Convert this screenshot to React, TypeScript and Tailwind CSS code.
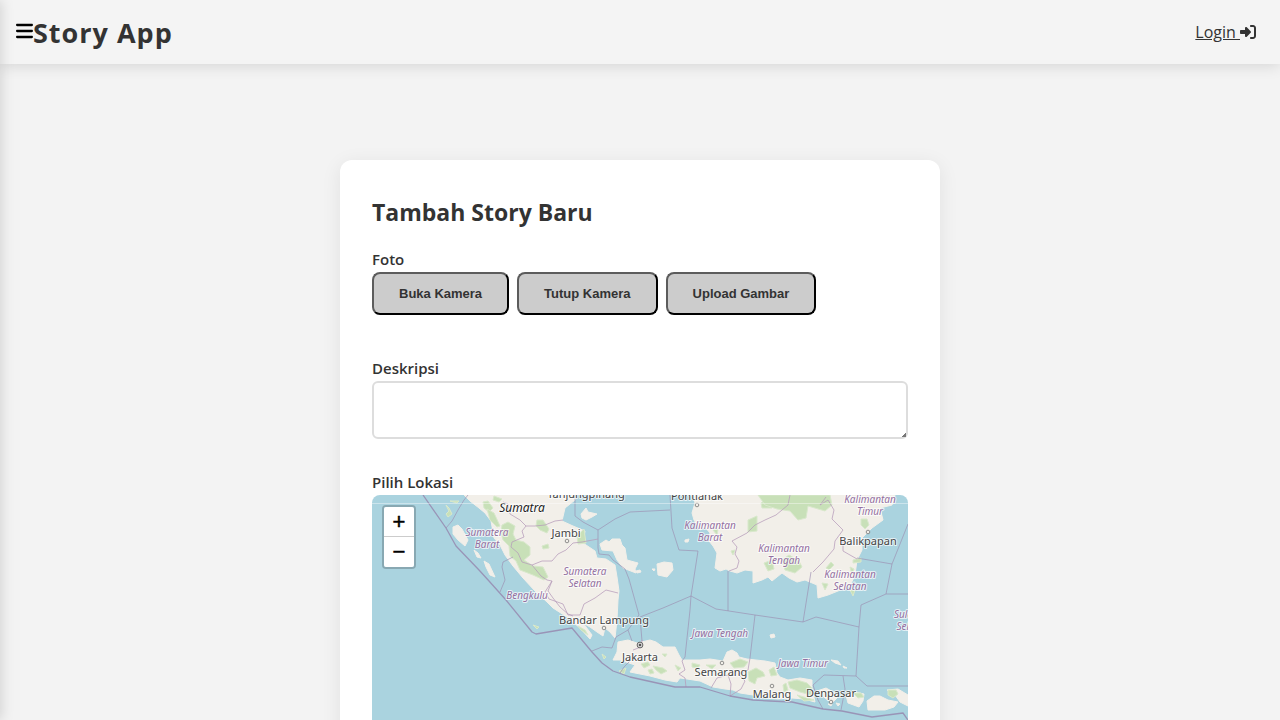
import { FaBars, FaRightToBracket } from "react-icons/fa6";

const land = [
  // Sumatra
  "M464 495L470 501L479 508L485 513L491 521L494 538L500 545L505 555L513 566L523 578L535 591L547 602L553 608L567 617L580 628L590 639L592 635L583 623L590 627L597 632L603 636L605 628L610 632L615 638L617 620L618 600L619 591L617 577L615 565L606 559L597 558L595 551L583 543L585 531L573 526L562 521L565 508L575 500L576 495Z",
  // Bangka
  "M602 550L600 544L606 540L609 542L612 539L620 539L622 545L625 548L627 560L638 563L635 569L636 573L623 568L617 560L613 551Z",
  // Belitung
  "M657 564L664 562L672 563L673 570L667 577L658 575Z",
  // Kalimantan
  "M693 495L695 503L692 513L694 520L700 530L705 527L710 533L709 541L713 546L717 553L715 568L720 571L726 569L730 571L737 573L745 570L753 571L753 583L762 580L768 577L772 581L782 573L789 578L797 582L805 580L817 585L818 598L828 595L838 591L850 586L855 575L857 560L862 550L862 538L872 528L883 520L880 508L892 505L895 495Z",
  // Java
  "M613 660L617 652L618 642L628 640L637 643L650 640L656 642L663 647L675 647L679 655L682 660L700 660L710 659L723 661L727 652L732 650L737 653L739 657L747 659L765 661L775 663L777 673L780 677L788 680L800 678L812 680L812 688L815 702L804 699L792 698L778 699L765 698L753 695L740 693L733 690L725 689L713 687L700 681L687 679L680 678L677 682L665 680L650 676L630 672L635 665L620 660Z",
  // Bali, Lombok, Sumbawa
  "M817 691L826 688L835 693L838 697L832 703L825 698Z",
  "M846 695L855 692L864 694L863 701L859 707L848 703Z",
  "M867 701L874 696L880 696L888 700L898 702L894 707L885 710L868 710Z",
  "M887 690L898 689L908 695L908 706L900 702L895 695Z",
  // Islands off the west coast
  "M453 527L458 525L462 529L468 540L465 546L458 540L453 534Z",
  "M474 550L478 553L481 558L477 557Z",
  "M484 561L489 564L495 577L490 575L486 567Z",
  "M581 514L586 508L588 512L597 514L592 517L586 520L582 518Z",
  "M685 540L689 539L688 542L685 542Z",
  "M636 571L640 570L641 572L637 573ZM652 569L655 569L654 571Z",
  "M770 635L774 634L775 637L771 638ZM831 660L838 661L841 665L835 663ZM843 666L847 668L844 668Z",
  "M828 704L832 704L831 706ZM836 703L840 704L838 706Z",
];

const forest = [
  "M483 502L488 501L493 508L489 512L484 508Z",
  "M487 509L494 513L500 526L497 527L490 520Z",
  "M494 496L502 499L499 502L493 500Z",
  "M446 505L449 508L452 514L448 517L446 514L449 511ZM450 501L459 501L457 503Z",
  "M502 525L508 522L515 526L513 534L516 540L524 542L530 547L530 555L524 560L533 566L543 567L548 577L544 580L533 575L520 570L516 561L510 556L509 546L503 540L501 532Z",
  "M537 520L543 520L549 529L547 533L540 530L536 526Z",
  "M542 546L548 544L549 548L543 549Z",
  "M577 536L584 529L586 543L578 544Z",
  "M533 625L539 627L537 629ZM578 626L585 630L588 635L581 630ZM602 654L606 657L604 659Z",
  "M761 503L768 498L778 500L772 508L762 508Z",
  "M748 520L757 516L757 531L748 532Z",
  "M758 495L830 495L832 505L825 511L808 506L806 518L798 520L790 511L777 509L765 505Z",
  "M764 563L772 560L774 569L768 571ZM782 560L789 555L799 561L802 567L795 573L785 570Z",
  "M861 519L867 519L869 525L865 529L861 525Z",
  "M853 560L861 558L861 562L853 563ZM850 567L854 569L852 575ZM822 583L828 584L825 590ZM826 568L831 562L834 565L829 570ZM850 590L855 590L853 596Z",
  "M713 530L718 529L717 535ZM731 551L735 550L733 555Z",
  "M641 664L648 662L650 665L644 668ZM653 666L663 668L667 671L661 674L656 670ZM648 670L652 669L654 673L650 674Z",
  "M662 654L667 654L665 657ZM675 665L681 668L678 671Z",
  "M692 663L700 665L698 668L692 667ZM706 665L716 665L712 669ZM730 663L740 659L748 662L744 667L734 668Z",
  "M748 672L756 668L763 672L765 676L757 678L755 684L749 681Z",
  "M788 682L797 680L807 683L812 688L811 695L800 692L790 688ZM797 695L814 700L804 701Z",
  "M769 670L774 667L777 675L771 676ZM783 685L786 683L788 690L784 692Z",
  "M853 693L861 693L864 697L858 698ZM888 690L896 690L898 694L893 698L888 695Z",
  "M619 671L626 668L624 674Z",
];

const seaBorders = [
  "M446 528L452 521L458 510L464 500L468 495",
  "M500 592L505 580L502 567L503 562L513 557",
  "M575 495L575 516L583 522L598 530L598 548L599 554L609 555L613 560L625 569L629 579L639 615",
  "M598 530L615 519L630 512L670 510",
  "M670 495L672 528L679 550L698 551L691 596L663 608L640 617L642 641",
  "M728 571L728 611M691 596L690 610L685 657L682 661",
  "M691 596L716 609L755 615L803 622L816 617L859 627",
  "M811 572L803 622",
  "M857 558L892 564L908 524M892 564L886 594L861 605L859 627L856 676L867 686L908 686M886 594L908 594",
  "M755 615L750 658",
  "M592 651L602 647L612 648L616 637L628 630L639 615",
  "M620 673L624 667L630 661",
  "M823 709L818 700L813 685L824 675L856 676M843 676L845 689L841 710",
  "M628 630L632 641",
];

const landBorders = [
  "M503 502L508 504L510 514L520 520L526 526L522 531L524 537L512 542L511 547L518 553L522 562L532 565L541 576L547 580L552 581L548 591L553 598L560 607L568 614L573 616",
  "M526 526L535 526L545 525L555 521L563 520",
  "M532 565L542 561L552 561L558 554L566 550L573 543L582 542L598 539",
  "M552 581L545 592L549 599L563 604L568 615L580 615L584 604L595 598L606 590L618 593",
  "M765 520L755 525L747 533L732 541L737 547L735 554L739 561L737 568L729 571",
  "M765 520L776 515L788 505L790 495",
  "M820 505L828 500L834 510L832 519L843 530L835 541L834 549L823 562L813 572",
  "M843 538L843 551L857 559M820 505L826 497",
  "M682 661L685 670L679 674L685 678L686 687",
  "M711 688L717 678L728 675L731 684L730 696L741 689L745 681L738 674L748 670L750 658",
  "M633 650L641 647L642 640",
];

type Label = { x: number; y: number; text: string };

const cities: Label[] = [
  { x: 586, y: 498, text: "Tanjungpinang" },
  { x: 697, y: 500, text: "Pontianak" },
  { x: 566, y: 537, text: "Jambi" },
  { x: 868, y: 545, text: "Balikpapan" },
  { x: 604, y: 624, text: "Bandar Lampung" },
  { x: 640, y: 661, text: "Jakarta" },
  { x: 721, y: 676, text: "Semarang" },
  { x: 772, y: 698, text: "Malang" },
  { x: 831, y: 697, text: "Denpasar" },
];

const provinces: Label[] = [
  { x: 487, y: 536, text: "Sumatera" },
  { x: 487, y: 548, text: "Barat" },
  { x: 585, y: 575, text: "Sumatera" },
  { x: 585, y: 587, text: "Selatan" },
  { x: 527, y: 599, text: "Bengkulu" },
  { x: 710, y: 529, text: "Kalimantan" },
  { x: 710, y: 541, text: "Barat" },
  { x: 784, y: 552, text: "Kalimantan" },
  { x: 784, y: 564, text: "Tengah" },
  { x: 870, y: 503, text: "Kalimantan" },
  { x: 870, y: 515, text: "Timur" },
  { x: 850, y: 578, text: "Kalimantan" },
  { x: 850, y: 590, text: "Selatan" },
  { x: 720, y: 637, text: "Jawa Tengah" },
  { x: 803, y: 667, text: "Jawa Timur" },
  { x: 913, y: 618, text: "Sulawesi" },
  { x: 913, y: 630, text: "Selatan" },
];

const towns = [
  [567, 541],
  [697, 505],
  [868, 532],
  [604, 628],
  [722, 663],
  [772, 686],
  [831, 702],
];

function MapDrawing() {
  return (
    <svg
      viewBox="372 495 536 400"
      preserveAspectRatio="xMinYMin slice"
      className="block h-full w-full font-['Noto_Sans',sans-serif]"
      role="img"
      aria-label="Peta Indonesia"
    >
      <rect x="372" y="495" width="536" height="400" fill="#aad3df" />
      <g fill="#f2efe9" stroke="#f2efe9" strokeWidth="1" strokeLinejoin="round">
        {land.map((d) => (
          <path key={d} d={d} />
        ))}
      </g>
      <g fill="#c8e0b8" stroke="#d8e8cb" strokeWidth="1" strokeLinejoin="round">
        {forest.map((d) => (
          <path key={d} d={d} />
        ))}
      </g>
      <g fill="none" stroke="#9b8db0" strokeOpacity="0.65" strokeWidth="1" strokeLinejoin="round">
        {seaBorders.map((d) => (
          <path key={d} d={d} />
        ))}
      </g>
      <g fill="none" stroke="#b59bba" strokeOpacity="0.75" strokeWidth="1" strokeLinejoin="round">
        {landBorders.map((d) => (
          <path key={d} d={d} />
        ))}
      </g>
      <path
        d="M423 495L446 528L456 546L479 570L489 581L506 600L532 632L536 634L572 628L592 652L602 663L613 671L630 677L675 687L700 687L730 696L753 700L770 701L792 702L823 709L842 711L872 717L903 713L908 720"
        fill="none"
        stroke="#9585ac"
        strokeOpacity="0.8"
        strokeWidth="1.3"
        strokeLinejoin="round"
      />
      <g fill="#f2efe9" stroke="#777" strokeWidth="0.8">
        {towns.map(([x, y]) => (
          <circle key={`${x}-${y}`} cx={x} cy={y} r="1.8" />
        ))}
      </g>
      <circle cx="640" cy="645" r="2.9" fill="#ddd" stroke="#555" strokeWidth="0.9" />
      <circle cx="640" cy="645" r="1.3" fill="#555" />
      <g
        textAnchor="middle"
        fill="#936fa0"
        stroke="#fff"
        strokeOpacity="0.7"
        strokeWidth="2"
        strokeLinejoin="round"
        paintOrder="stroke"
        fontStyle="italic"
        fontSize="10"
      >
        {provinces.map((l) => (
          <text key={`${l.text}-${l.x}-${l.y}`} x={l.x} y={l.y}>
            {l.text}
          </text>
        ))}
      </g>
      <g
        textAnchor="middle"
        fill="#444"
        stroke="#fff"
        strokeOpacity="0.7"
        strokeWidth="2"
        strokeLinejoin="round"
        paintOrder="stroke"
        fontSize="11"
      >
        {cities.map((l) => (
          <text key={l.text} x={l.x} y={l.y}>
            {l.text}
          </text>
        ))}
        <text x="522" y="512" fontStyle="italic" fontSize="12" fill="#222">
          Sumatra
        </text>
      </g>
      <path d="M372 503.5H908" stroke="#fff" strokeOpacity="0.4" strokeWidth="1" />
    </svg>
  );
}

const photoButton =
  "rounded-lg border-2 border-t-[#5c5c5c] border-l-[#5c5c5c] border-r-black border-b-black bg-[#ccc] px-[25px] py-3 font-['Liberation_Sans',sans-serif] text-[13px] leading-[15px] font-bold text-[#333]";

const fieldLabel = "block pb-0.5 text-[15px] leading-[22px] font-semibold";

export default function App() {
  return (
    <div className="h-screen overflow-x-hidden overflow-y-auto bg-[#f3f3f3] font-['Open_Sans','Noto_Sans',sans-serif] text-[#333] [scrollbar-width:none]">
      <aside
        aria-hidden="true"
        className="fixed inset-y-0 right-full z-20 w-60 bg-white shadow-[2px_0_12px_rgba(0,0,0,0.13)]"
      />
      <header className="flex h-16 items-center justify-between bg-[#f4f4f4] pr-6 pl-4 shadow-[0_2px_14px_rgba(0,0,0,0.12)]">
        <div className="flex items-center">
          <button type="button" aria-label="Menu" className="pb-0.5 text-black">
            <FaBars className="h-5 w-[17px]" />
          </button>
          <h1 className="pt-0.5 text-[27px] leading-10 font-bold tracking-[1px]">Story App</h1>
        </div>
        <a href="#login" className="flex items-center text-base leading-6 underline">
          <span className="whitespace-pre">Login </span>
          <FaRightToBracket className="size-4" />
        </a>
      </header>

      <main className="px-4 py-24">
        <form className="mx-auto max-w-[600px] rounded-xl bg-white p-8 shadow-[0_4px_20px_rgba(0,0,0,0.08)]">
          <h2 className="mb-4 text-[23px] leading-10 font-bold">Tambah Story Baru</h2>

          <div role="group" aria-labelledby="foto" className="mb-[42px]">
            <div id="foto" className={fieldLabel}>
              Foto
            </div>
            <div className="flex flex-wrap gap-2">
              <button type="button" className={photoButton}>
                Buka Kamera
              </button>
              <button type="button" className={photoButton}>
                Tutup Kamera
              </button>
              <button type="button" className={photoButton}>
                Upload Gambar
              </button>
            </div>
          </div>

          <div className="mb-8">
            <label htmlFor="deskripsi" className={fieldLabel}>
              Deskripsi
            </label>
            <textarea
              id="deskripsi"
              className="block h-[58px] w-full resize-y rounded-md border-2 border-[#ddd] bg-white p-2 text-base [&::-webkit-resizer]:bg-[linear-gradient(135deg,transparent_85%,#777_85%)]"
            />
          </div>

          <div role="group" aria-labelledby="lokasi">
            <div id="lokasi" className={fieldLabel}>
              Pilih Lokasi
            </div>
            <div className="relative h-[400px] overflow-hidden rounded-lg">
              <MapDrawing />
              <div className="absolute top-2.5 left-2.5 flex flex-col overflow-hidden rounded border-2 border-black/20 bg-clip-padding font-['Liberation_Sans',sans-serif] text-[22px] text-black">
                <button
                  type="button"
                  aria-label="Perbesar"
                  className="h-[30px] w-[30px] border-b border-[#ccc] bg-white leading-[29px] [-webkit-text-stroke:0.5px_black]"
                >
                  +
                </button>
                <button
                  type="button"
                  aria-label="Perkecil"
                  className="h-[30px] w-[30px] bg-white leading-[30px] [-webkit-text-stroke:0.5px_black]"
                >
                  −
                </button>
              </div>
            </div>
          </div>
        </form>
      </main>
    </div>
  );
}
